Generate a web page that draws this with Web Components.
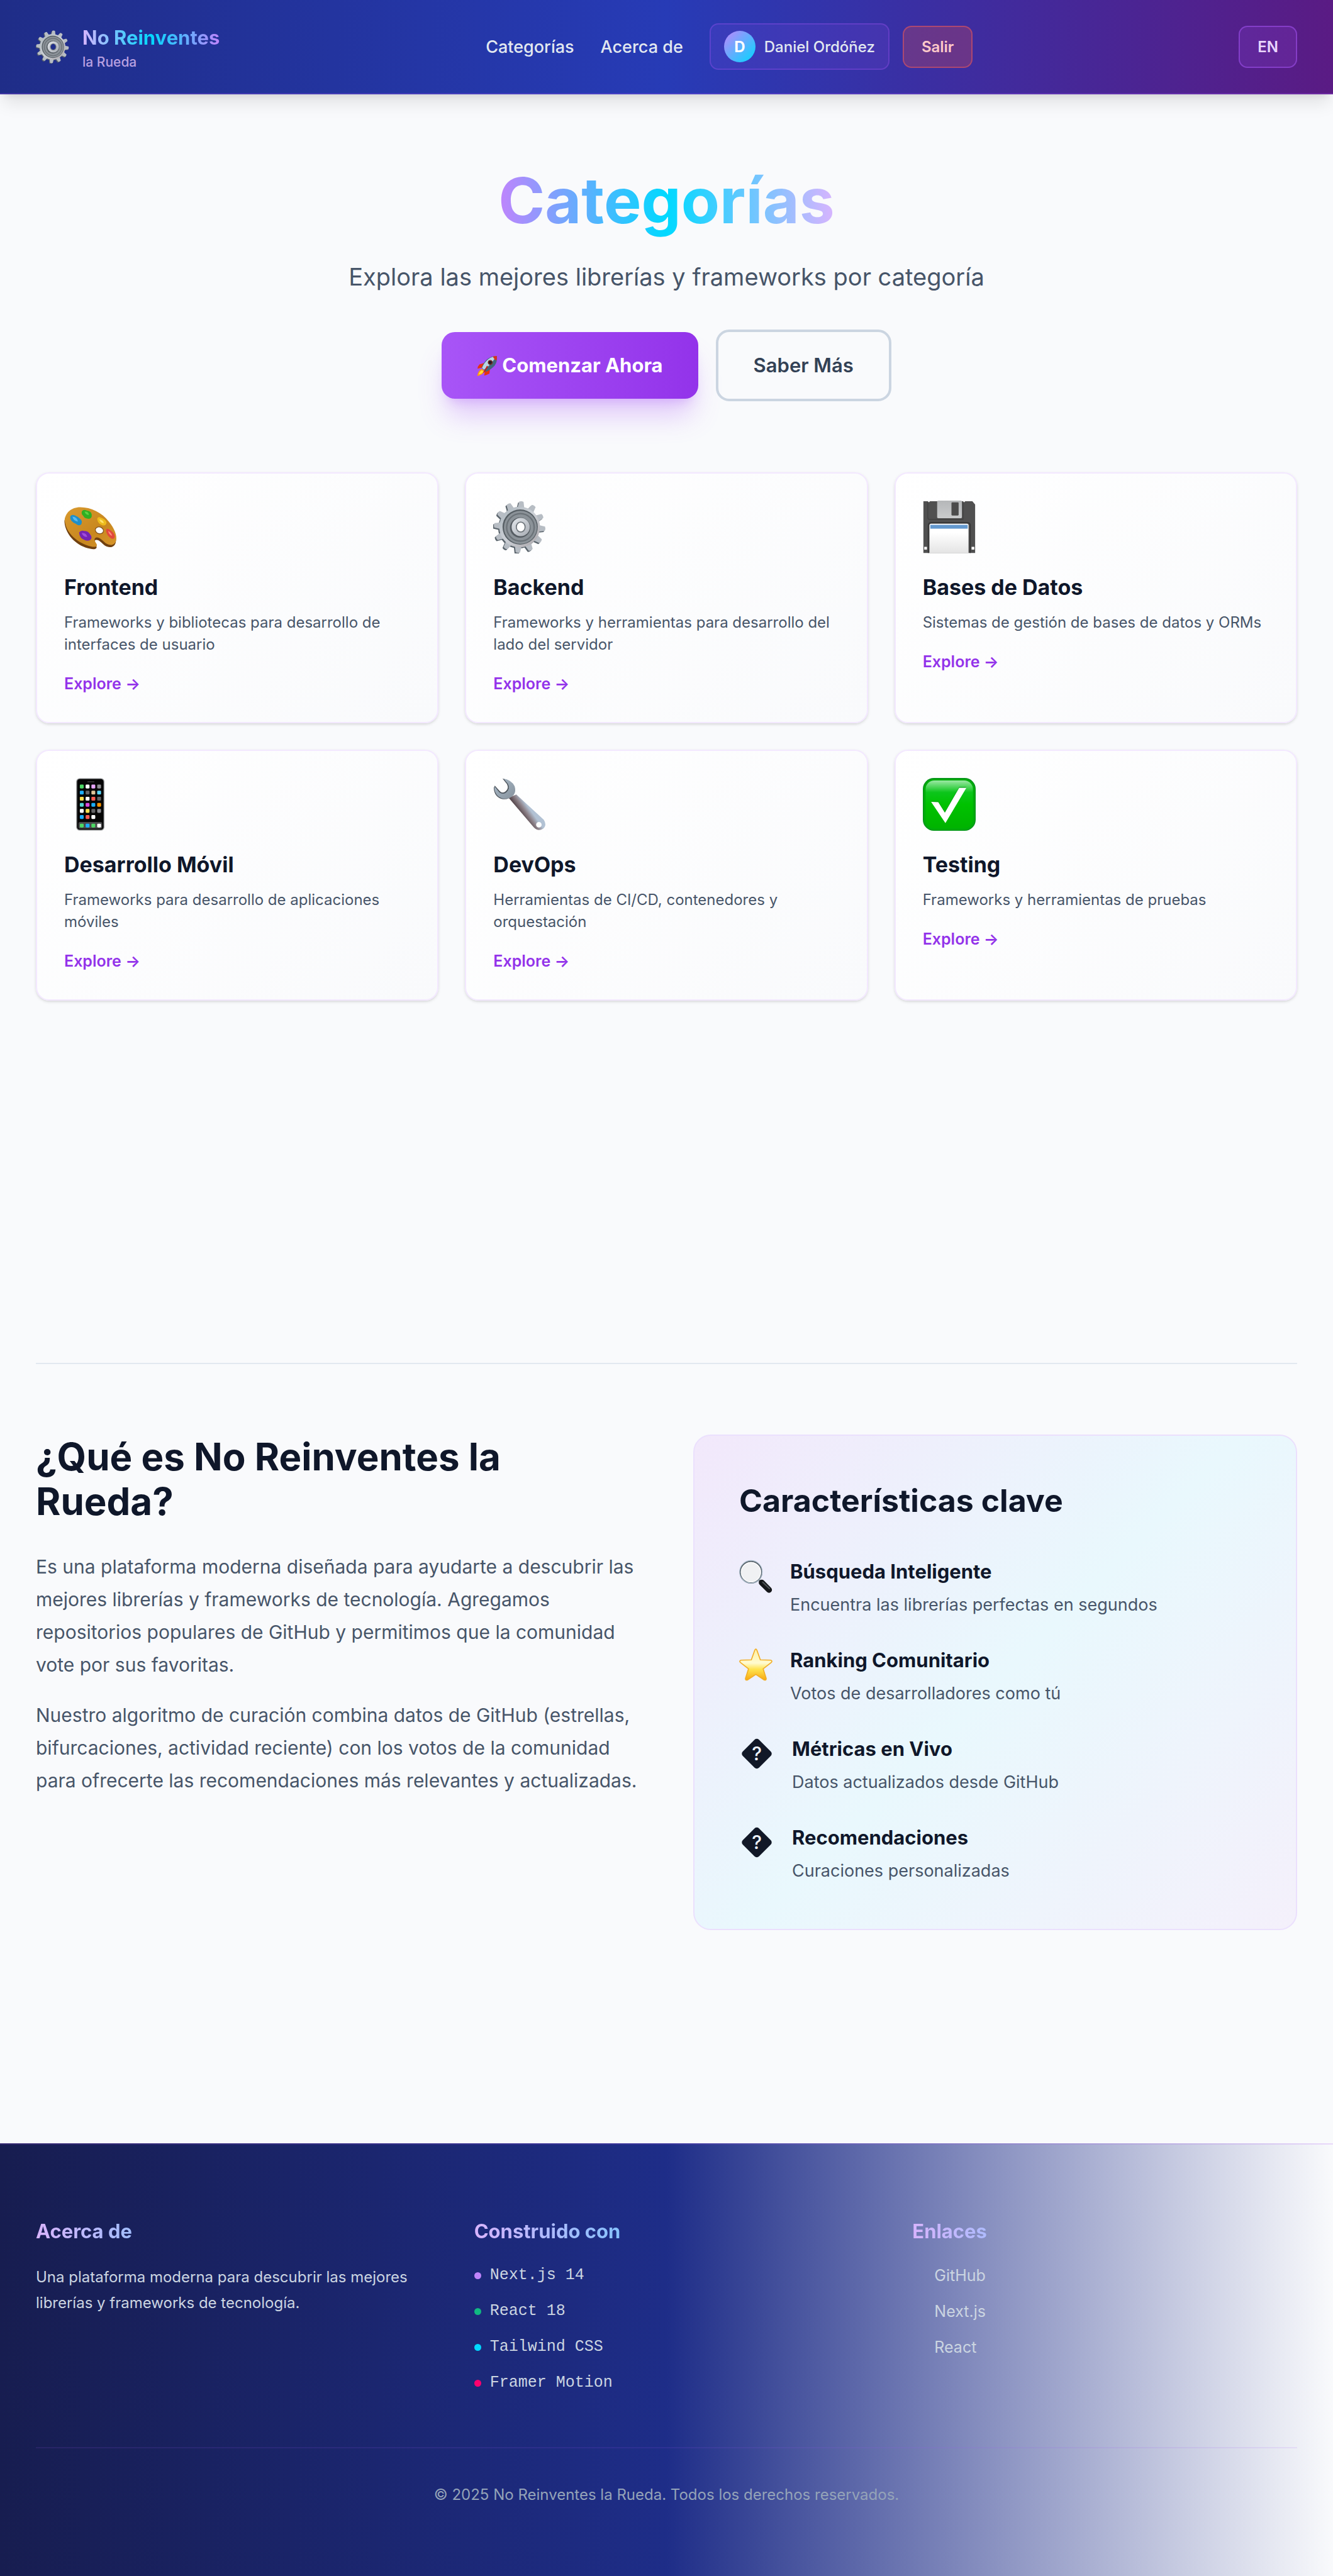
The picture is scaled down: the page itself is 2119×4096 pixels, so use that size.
<!DOCTYPE html>
<html lang="es">
<head>
<meta charset="utf-8">
<meta name="viewport" content="width=device-width, initial-scale=1">
<title>No Reinventes la Rueda</title>
<style>
  :root {
    --gutter: 57px;
    --ink: #0f172a;
    --muted: #475569;
    --purple: #9333ea;
    --cyan: #00d9ff;
  }
  body {
    margin: 0;
    background: #f9fafc;
    color: var(--ink);
    font-family: Inter, "Noto Sans", sans-serif;
    font-size: 24px;
    line-height: 35px;
  }
</style>
</head>
<body>
<nr-page></nr-page>

<script>
const define = (name, html, setup) => {
  const template = document.createElement('template');
  template.innerHTML = html;
  customElements.define(name, class extends HTMLElement {
    constructor() {
      super();
      this.attachShadow({ mode: 'open' }).append(template.content.cloneNode(true));
    }
    connectedCallback() {
      if (setup) setup(this, this.shadowRoot);
    }
  });
};

/* ---------- Icons ---------- */
const teeth = Array.from({ length: 12 }, (_, i) =>
  `<path transform="rotate(${i * 30 + 4} 48 48)" d="M42 13 L44 2 Q48 0 52 2 L54 13Z"/>`).join('');

const phoneRows = [
  ['#4cd964', '#fff', '#e9a6ff', '#8e8e93'],
  ['#1eaefc', '#636366', '#e0c59a', '#5ad8ff'],
  ['#ffdc4e', '#fff', '#ff5b52', '#636366'],
  ['#4fd6d2', '#d94ae0', '#1badf8', '#ff9500'],
  ['#fff', '#ffe14d', '#636366', '#8e8e93'],
  ['#1badf8', '#ff5b52', '#fff']
];
const phoneDock = ['#4cd964', '#1badf8', '#4cd964', '#fff'];
const app = (x, y, c) => `<rect x="${x}" y="${y}" width="7" height="7" rx="1.6" fill="${c}"/>`;
const phoneApps = phoneRows.map((row, r) => row.map((c, i) => app(28.5 + i * 10.5, 12 + r * 11.1, c)).join('')).join('')
  + phoneDock.map((c, i) => app(28.5 + i * 10.5, 83, c)).join('');

const ICONS = {
  gear: `<defs>
      <linearGradient id="g" x1="0" y1="0" x2="1" y2="1"><stop offset="0" stop-color="#aab4bc"/><stop offset=".5" stop-color="#ccd0d6"/><stop offset="1" stop-color="#a9a4a8"/></linearGradient>
      <linearGradient id="h" x1="0" y1="0" x2="1" y2="1"><stop offset="0" stop-color="#e3e7ec"/><stop offset="1" stop-color="#a6abb2"/></linearGradient>
      <mask id="m"><rect width="96" height="96" fill="#fff"/><ellipse cx="50" cy="48" rx="7" ry="8" fill="#000"/></mask></defs>
    <g mask="url(#m)"><g fill="#59636b" transform="translate(-2 2)">${teeth}<circle cx="48" cy="48" r="37"/></g>
    <g fill="url(#g)"><g fill="#b7bdc4">${teeth}</g><circle cx="48" cy="48" r="37"/></g>
    <circle cx="49" cy="48" r="32" fill="#565e64"/><circle cx="49.5" cy="48.500" r="30" fill="#8b9298"/>
    <circle cx="49.500" cy="48.500" r="25" fill="none" stroke="#6b7278" stroke-width="2.500"/>
    <circle cx="49" cy="49" r="18.500" fill="#565d63"/><circle cx="50" cy="48" r="16.500" fill="url(#h)"/>
    <ellipse cx="50" cy="48" rx="9" ry="10" fill="#6f767c"/></g>`,
  palette: `<defs><linearGradient id="g" x1="0" y1="0" x2="1" y2="1"><stop offset="0" stop-color="#d99a2e"/><stop offset=".6" stop-color="#c8871f"/><stop offset="1" stop-color="#d8962b"/></linearGradient></defs>
    <path fill="#70400f" transform="translate(-.5 2.500)" d="M1 36C2 22 13 12 29 12C49 12 69 22 81 38C91 50 97 64 94 74C92 82 83 85 74 79C68 74 64 68 58 69C53 71 57 76 59 80C61 85 56 87 48 85C26 81 3 62 1 36Z"/>
    <path fill="url(#g)" d="M1 36C2 22 13 12 29 12C49 12 69 22 81 38C91 50 97 64 94 73C92 81 84 83 75 77C69 72 64 66 58 67C52 69 57 75 59 79C61 84 56 85 48 83C26 78 3 60 1 36Z"/>
    <ellipse cx="64" cy="54" rx="7.500" ry="6" transform="rotate(20 64 54)" fill="#fdfdfe" stroke="#70400f" stroke-width="1.200"/>
    <path fill="#2fae22" d="M32 20q2-5 9-2q8 1 9 7q1 7-5 8q-8 0-10-5q-4-3-3-8z"/><path fill="#5bd343" d="M37 20q7-1 8 6q-6 0-8-6z"/>
    <path fill="#1f8fc8" d="M11 29q2-5 9-2q5 2 9 6q5 4 2 10q-5 4-10-1q-11-5-10-13z"/><path fill="#58baf0" d="M15 29q9 1 10 9q-8-1-10-9z"/>
    <path fill="#edbb1c" d="M60 33q1-5 7-2q9 3 10 9q-1 6-7 5q-9-3-10-12z"/><path fill="#ffe269" d="M64 34q7 1 8 7q-7-1-8-7z"/>
    <path fill="#7523b3" d="M27 58q4-5 9-3q8 0 11 6q5 6 1 10q-5 3-10 1q-10-3-11-14z"/><path fill="#a04ddd" d="M32 59q8-1 10 7q-8 0-10-7z"/>
    <path fill="#e2483b" d="M76 54q1-5 7-1q7 4 9 11q0 7-6 5q-9-5-10-15z"/><path fill="#ff8a7d" d="M80 55q6 3 7 9q-6-2-7-9z"/>`,
  floppy: `<defs><linearGradient id="g" x1="0" y1="0" x2="0" y2="1"><stop offset=".3" stop-color="#fff"/><stop offset="1" stop-color="#e4e4e4"/></linearGradient>
      <linearGradient id="h" x1="0" y1="0" x2="0" y2="1"><stop offset="0" stop-color="#b5b7b9"/><stop offset="1" stop-color="#c9cbcc"/></linearGradient></defs>
    <path fill="#505050" d="M1 1h8l2 2l2-2h60l2 2l2-2h13l5 6v88H1z"/>
    <path d="M9 3v28q0 3 3 3h61V3" fill="none" stroke="#404040" stroke-width="1.500"/>
    <rect x="26" y="0" width="45" height="32" rx="2" fill="url(#h)"/><rect x="52" y="3" width="13" height="24" rx="1.500" fill="#4c4c4c"/>
    <path d="M10 95V45q0-5 5-5h66q5 0 5 5v50" fill="none" stroke="#363636" stroke-width="2"/>
    <path fill="url(#g)" d="M12 95V45q0-3 3-3h65q3 0 3 3v50z"/><rect x="13.500" y="44" width="68" height="7" fill="#6399cf"/>
    <rect x="2.500" y="84" width="5" height="5" fill="#fff"/><rect x="88.500" y="84" width="5" height="5" fill="#fff"/>`,
  phone: `<rect x="22" y=".5" width="51" height="95" rx="6" fill="#8a8c8e"/><rect x="23.500" y="2" width="48" height="92" rx="5" fill="#050505"/>
    <rect x="26" y="80" width="43" height="12" rx="3" fill="#4a4a4c"/><rect x="42" y="6" width="13" height="2" rx="1" fill="#333"/>${phoneApps}`,
  wrench: `<defs><linearGradient id="g" gradientUnits="userSpaceOnUse" x1="52" y1="66" x2="66" y2="56"><stop offset="0" stop-color="#5b4c52"/><stop offset=".5" stop-color="#8d8188"/><stop offset="1" stop-color="#b2c2d4"/></linearGradient>
      <linearGradient id="h" x1="0" y1="0" x2="1" y2="1"><stop offset="0" stop-color="#a9bac8"/><stop offset="1" stop-color="#87929d"/></linearGradient></defs>
    <path fill="url(#g)" fill-rule="evenodd" d="M28 36L42 30L92 76Q98 86 91 92Q82 98 74 90ZM88 85a5 5 0 1 0-10 0a5 5 0 1 0 10 0Z"/>
    <path fill="#4d545c" d="M17 1Q33 4 38 15Q41 25 36 31Q27 41 15 38Q2 34 1 18L3 14L12 24Q17 29 23 24Q29 19 25 11Z"/>
    <path fill="url(#h)" d="M19 1Q34 4 39 15Q42 25 37 31Q28 40 16 37Q4 33 2 19L3 16L11 26Q18 31 24 26Q31 19 27 11Z"/>`,
  check: `<defs><linearGradient id="g" x1="0" y1="0" x2="0" y2="1"><stop offset="0" stop-color="#9be8a4"/><stop offset=".25" stop-color="#0cc51b"/><stop offset=".5" stop-color="#00c200"/><stop offset="1" stop-color="#00b300"/></linearGradient></defs>
    <rect width="96" height="96" rx="20" fill="#04941a"/><rect x="1.500" y="2" width="93" height="92.500" rx="19" fill="#00ad0a"/><rect x="5" y="4.500" width="86" height="87" rx="16" fill="url(#g)"/>
    <path fill="#089016" opacity=".5" d="M15 42L28 42L40 61L66 16H79L41 80Z"/><path fill="#fff" d="M15 43.500L28 44L40 63L66 18H79L41 82Z"/>`,
  rocket: `<path fill="#e8320f" d="M38 34L12 42Q4 50 3 62L28 56ZM62 56L58 84Q46 90 34 94L38 70Z"/>
    <path fill="#ff9a10" d="M24 62Q6 68 2 96Q28 90 36 74Z"/><path fill="#ffe23c" d="M24 68Q12 74 8 89Q22 86 30 76Z"/>
    <path fill="#42667d" d="M92 3Q96 30 82 48Q66 66 42 76L22 58Q30 34 48 18Q66 4 92 3Z"/><path fill="#b9d6e6" d="M90 4Q66 6 50 20Q32 36 24 58L33 66Q62 48 90 4Z"/>
    <path fill="#d8301c" d="M92 3Q94 14 91 24Q82 22 74 6Q84 3 92 3Z"/><circle cx="62" cy="33" r="11" fill="#7c2620"/><circle cx="62" cy="33" r="7" fill="#1b1c28"/>
    <path fill="#c41d10" d="M47 48L52 52L36 78L28 82Z"/>`,
  magnifier: `<path d="M54 56L64 66" stroke="#8a9095" stroke-width="6"/>
    <path d="M65 66L86 87" stroke="#15171a" stroke-width="17" stroke-linecap="round"/><path d="M68 65L87 83" stroke="#4c5154" stroke-width="4" stroke-linecap="round"/>
    <circle cx="34" cy="36" r="31" fill="#f0f1f3" stroke="#566068" stroke-width="4"/><circle cx="34" cy="35" r="32.500" fill="none" stroke="#a9bccb" stroke-width="2"/>
    <circle cx="34" cy="36" r="28" fill="none" stroke="#fff" stroke-width="2"/>`,
  star: `<defs><linearGradient id="g" x1="0" y1="0" x2="0" y2="1"><stop offset="0" stop-color="#fff1a0"/><stop offset=".45" stop-color="#fffbd0"/><stop offset=".65" stop-color="#ffe44e"/><stop offset="1" stop-color="#f7a812"/></linearGradient></defs>
    <path fill="url(#g)" stroke="#f2ae26" stroke-width="3" stroke-linejoin="round" d="M45 5Q48-1 51 5L61 33L91 34Q97 36 92 41L69 59L78 87Q78 93 72 91L48 75L24 91Q18 93 18 87L27 59L4 41Q-1 36 5 34L35 33Z"/>`,
  unknown: `<rect x="15" y="15" width="66" height="66" rx="9" transform="rotate(45 48 48)" fill="#111827"/>
    <text x="48" y="67" text-anchor="middle" font-size="54" font-weight="500" fill="#eef4fc">?</text>`
};

define('nr-icon', `<style>
  :host { display: block; flex: none; }
  svg { display: block; width: 100%; height: 100%; overflow: visible; fill: none; }
</style><svg viewBox="0 0 96 96" aria-hidden="true"></svg>`, (host, root) => {
  root.querySelector('svg').innerHTML = ICONS[host.getAttribute('name')] || '';
});

/* ---------- Header ---------- */
define('nr-brand', `<style>
  :host { display: block; }
  a { display: flex; align-items: center; gap: 21px; text-decoration: none; color: inherit; }
  nr-icon { width: 53px; height: 53px; }
  .text { padding-top: 6px; }
  .name { display: block; font-size: 31px; line-height: 44px; font-weight: 700;
    background: linear-gradient(90deg, #d8b4fe, var(--cyan) 50%, #c084fc); -webkit-background-clip: text; background-clip: text; color: transparent; }
  .tag { display: block; font-size: 21px; line-height: 34px; font-weight: 500; color: #b8a0e0; }
</style>
<a href="#"><nr-icon name="gear"></nr-icon><span class="text"><span class="name"><slot name="name"></slot></span><span class="tag"><slot name="tag"></slot></span></span></a>`);

define('nr-header', `<style>
  :host { display: block; position: relative; z-index: 1; box-sizing: border-box;
    background: linear-gradient(90deg, #1f2d88, #273bb6 50%, #5a1b84);
    border-bottom: 2px solid rgba(168, 85, 247, .25); background-origin: border-box;
    box-shadow: 0 18px 26px -5px rgba(0, 0, 0, .1), 0 7px 11px -7px rgba(0, 0, 0, .1); }
  header { display: flex; align-items: center; justify-content: space-between; min-height: 148px; padding: 0 var(--gutter); }
  nav { display: flex; align-items: center; gap: 42px; }
  nav a { color: #e2e8f0; text-decoration: none; font-size: 27px; font-weight: 500; }
  .account { display: flex; align-items: center; gap: 21px; }
  nav a.user { display: flex; align-items: center; gap: 14px; padding: 10px 21px; border: 2px solid rgba(168, 85, 247, .3);
    border-radius: 14px; background: rgba(168, 85, 247, .12); font-size: 24px; }
  .avatar { display: grid; place-items: center; width: 50px; height: 50px; border-radius: 50%; color: #fff; font-weight: 700;
    background: linear-gradient(135deg, #c084fc, var(--cyan)); }
  button { font: inherit; font-weight: 600; padding: 14px 28px; border-radius: 14px; cursor: pointer; }
  .out { color: #ffc9c9; background: rgba(239, 80, 68, .25); border: 2px solid rgba(239, 90, 90, .5); }
  .lang { color: #e9d5ff; background: rgba(168, 85, 247, .15); border: 2px solid rgba(168, 85, 247, .5); }
</style>
<header>
  <nr-brand><span slot="name">No Reinventes</span><span slot="tag">la Rueda</span></nr-brand>
  <nav>
    <a href="#categorias">Categorías</a>
    <a href="#acerca">Acerca de</a>
    <div class="account">
      <a class="user" href="#perfil"><span class="avatar">D</span><span>Daniel Ordóñez</span></a>
      <button type="button" class="out">Salir</button>
    </div>
  </nav>
  <button type="button" class="lang">EN</button>
</header>`);

/* ---------- Hero ---------- */
define('nr-hero', `<style>
  :host { display: flex; flex-direction: column; align-items: center; padding: 103px 0 113px; text-align: center; }
  h1 { margin: 0; font-size: 100px; line-height: 132px; font-weight: 700;
    background: linear-gradient(90deg, #c084fc, var(--cyan) 50%, #d8b4fe); -webkit-background-clip: text; background-clip: text; color: transparent; }
  p { margin: 26px 0 55px; font-size: 38px; line-height: 58px; color: var(--muted); }
  div { display: flex; align-items: center; gap: 28px; }
  button { display: flex; align-items: center; gap: 7px; box-sizing: border-box; font: inherit; font-size: 31px; line-height: 50px; cursor: pointer;
    padding: 28px 56px; border: 0; border-radius: 21px; }
  nr-icon { width: 33px; height: 33px; }
  .primary { color: #fff; font-weight: 700; background: linear-gradient(90deg, #a855f7, #9333ea);
    box-shadow: 0 35px 44px -9px rgba(168, 85, 247, .3), 0 14px 18px -11px rgba(168, 85, 247, .3); }
  .secondary { color: #334155; font-weight: 600; background: transparent; border: 4px solid #cbd5e1; }
</style>
<h1>Categorías</h1>
<p>Explora las mejores librerías y frameworks por categoría</p>
<div>
  <button type="button" class="primary"><nr-icon name="rocket"></nr-icon>Comenzar Ahora</button>
  <button type="button" class="secondary">Saber Más</button>
</div>`);

/* ---------- Category cards ---------- */
define('nr-category', `<style>
  :host { display: block; box-sizing: border-box; padding: 43px; border: 2px solid #f3e8ff; border-radius: 21px;
    background: linear-gradient(135deg, #fff, #f9fafc);
    box-shadow: 0 2px 5px rgba(0, 0, 0, .1), 0 2px 4px -2px rgba(0, 0, 0, .1); }
  nr-icon { width: 84px; height: 84px; }
  h3 { margin: 29px 0 14px; font-size: 34px; line-height: 49px; font-weight: 700; }
  p { margin: 0 0 28px; color: var(--muted); }
  a { display: block; color: var(--purple); font-size: 25px; font-weight: 600; text-decoration: none; }
</style>
<nr-icon></nr-icon><h3><slot name="title"></slot></h3><p><slot></slot></p><a href="#">Explore →</a>`, (host, root) => {
  const icon = document.createElement('nr-icon');
  icon.setAttribute('name', host.getAttribute('icon'));
  root.querySelector('nr-icon').replaceWith(icon);
});

define('nr-categories', `<style>
  :host { display: grid; grid-template-columns: repeat(3, minmax(0, 1fr)); gap: 42px; }
</style>
<nr-category icon="palette"><span slot="title">Frontend</span>Frameworks y bibliotecas para desarrollo de interfaces de usuario</nr-category>
<nr-category icon="gear"><span slot="title">Backend</span>Frameworks y herramientas para desarrollo del lado del servidor</nr-category>
<nr-category icon="floppy"><span slot="title">Bases de Datos</span>Sistemas de gestión de bases de datos y ORMs</nr-category>
<nr-category icon="phone"><span slot="title">Desarrollo Móvil</span>Frameworks para desarrollo de aplicaciones móviles</nr-category>
<nr-category icon="wrench"><span slot="title">DevOps</span>Herramientas de CI/CD, contenedores y orquestación</nr-category>
<nr-category icon="check"><span slot="title">Testing</span>Frameworks y herramientas de pruebas</nr-category>`);

/* ---------- About ---------- */
define('nr-feature', `<style>
  :host { display: flex; align-items: flex-start; gap: 28px; }
  .icon { display: grid; place-items: center; flex: none; height: 64px; }
  h4 { margin: 0; font-size: 31px; line-height: 49px; font-weight: 700; }
  p { margin: 7px 0 0; font-size: 27px; line-height: 43px; color: var(--muted); }
</style>
<div class="icon"><slot name="icon"></slot></div>
<div><h4><slot name="title"></slot></h4><p><slot></slot></p></div>`);

define('nr-about', `<style>
  :host { display: grid; grid-template-columns: repeat(2, minmax(0, 1fr)); gap: 85px; align-items: start;
    margin-top: 576px; padding: 112px 0 339px; border-top: 2px solid #e2e8f0; }
  h2 { margin: 0 0 42px; font-size: 60px; line-height: 71px; font-weight: 700; }
  .text p { margin: 0 0 28px; font-size: 30px; line-height: 52px; color: var(--muted); }
  aside { display: flex; flex-direction: column; gap: 42px; padding: 71px; border: 2px solid #ebe0fd; border-radius: 28px;
    background: linear-gradient(135deg, #f2e8fb, #e9f8fd 50%, #f4f0fb); }
  h3 { margin: 0 0 14px; font-size: 50px; line-height: 64px; font-weight: 700; }
  nr-icon { width: 53px; height: 53px; }
  nr-icon[name="unknown"] { width: 56px; }
</style>
<div class="text">
  <h2>¿Qué es No Reinventes la Rueda?</h2>
  <p>Es una plataforma moderna diseñada para ayudarte a descubrir las mejores librerías y frameworks de tecnología. Agregamos repositorios populares de GitHub y permitimos que la comunidad vote por sus favoritas.</p>
  <p>Nuestro algoritmo de curación combina datos de GitHub (estrellas, bifurcaciones, actividad reciente) con los votos de la comunidad para ofrecerte las recomendaciones más relevantes y actualizadas.</p>
</div>
<aside>
  <h3>Características clave</h3>
  <nr-feature><nr-icon slot="icon" name="magnifier"></nr-icon><span slot="title">Búsqueda Inteligente</span>Encuentra las librerías perfectas en segundos</nr-feature>
  <nr-feature><nr-icon slot="icon" name="star"></nr-icon><span slot="title">Ranking Comunitario</span>Votos de desarrolladores como tú</nr-feature>
  <nr-feature><nr-icon slot="icon" name="unknown"></nr-icon><span slot="title">Métricas en Vivo</span>Datos actualizados desde GitHub</nr-feature>
  <nr-feature><nr-icon slot="icon" name="unknown"></nr-icon><span slot="title">Recomendaciones</span>Curaciones personalizadas</nr-feature>
</aside>`);

/* ---------- Footer ---------- */
define('nr-footer-column', `<style>
  :host { display: block; }
  h4 { margin: 0 0 28px; font-size: 31px; line-height: 49px; font-weight: 700;
    background: linear-gradient(90deg, #d8b4fe, var(--cyan)); -webkit-background-clip: text; background-clip: text; color: transparent; }
</style><h4><slot name="title"></slot></h4><slot></slot>`);

define('nr-footer', `<style>
  :host { display: block; padding: 113px var(--gutter); border-top: 2px solid rgba(168, 85, 247, .2); color: #cbd5e1;
    background: linear-gradient(90deg, #171d50, #1e2d88 50%, rgba(30, 45, 136, 0)); background-origin: border-box; }
  .columns { display: grid; grid-template-columns: repeat(3, minmax(0, 1fr)); gap: 85px; }
  p { margin: 0; line-height: 41px; }
  ul { display: flex; flex-direction: column; gap: 21px; margin: 0; padding: 0; list-style: none; font-size: 25px; line-height: 36px; }
  .stack li { display: flex; align-items: center; gap: 14px; font-family: "Liberation Mono", monospace; }
  .stack li::before { content: ""; width: 11px; height: 11px; border-radius: 50%; background: var(--dot); }
  .links { padding-left: 35px; }
  a { color: inherit; text-decoration: none; }
  .legal { margin-top: 84px; padding-top: 56px; border-top: 2px solid rgba(168, 85, 247, .12); text-align: center; line-height: 36px; color: #94a3b8; }
</style>
<footer>
  <div class="columns">
    <nr-footer-column><span slot="title">Acerca de</span><p>Una plataforma moderna para descubrir las mejores librerías y frameworks de tecnología.</p></nr-footer-column>
    <nr-footer-column><span slot="title">Construido con</span>
      <ul class="stack">
        <li style="--dot:#c084fc">Next.js 14</li><li style="--dot:#10b981">React 18</li>
        <li style="--dot:#00d9ff">Tailwind CSS</li><li style="--dot:#ff006e">Framer Motion</li>
      </ul></nr-footer-column>
    <nr-footer-column><span slot="title">Enlaces</span>
      <ul class="links"><li><a href="#github">GitHub</a></li><li><a href="#nextjs">Next.js</a></li><li><a href="#react">React</a></li></ul></nr-footer-column>
  </div>
  <div class="legal">© 2025 No Reinventes la Rueda. Todos los derechos reservados.</div>
</footer>`);

define('nr-page', `<style>
  :host { display: block; }
  main { padding: 0 var(--gutter); }
</style>
<nr-header></nr-header>
<main><nr-hero></nr-hero><nr-categories></nr-categories><nr-about></nr-about></main>
<nr-footer></nr-footer>`);
</script>
</body>
</html>
